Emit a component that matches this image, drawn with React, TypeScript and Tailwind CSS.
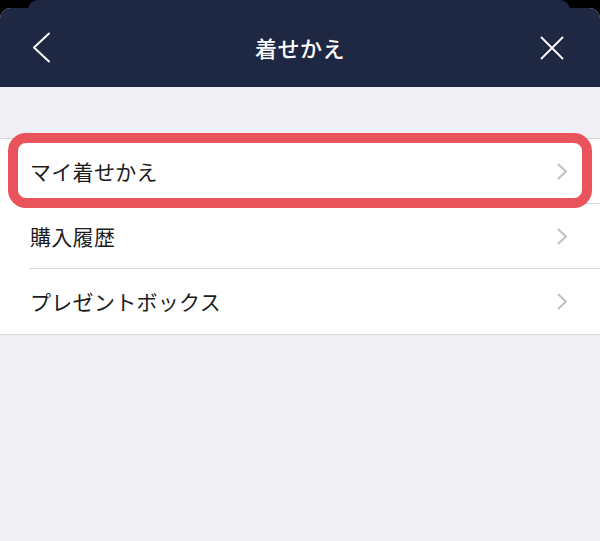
import React from "react";

const font = { fontFamily: '"Noto Sans CJK JP", "Noto Sans", sans-serif' };

function Chevron() {
  return (
    <svg width="11" height="17" viewBox="0 0 11 17" fill="none">
      <path d="M1.5 1.5 L9 8.5 L1.5 15.5" stroke="#bfbfc4" strokeWidth="2" strokeLinecap="round" strokeLinejoin="round" />
    </svg>
  );
}

function Row({ label, highlight, last }: { label: string; highlight?: boolean; last?: boolean }) {
  return (
    <div className="relative h-[65px] bg-white">
      <div className="flex h-full items-center justify-between pl-[30px] pr-[32px]">
        <span className="text-[21px] leading-none tracking-[0.3px] text-[#1c1c1e]">{label}</span>
        <Chevron />
      </div>
      {!last && <div className="absolute bottom-0 left-[29px] right-0 h-px bg-[#d9d9de]" />}
      {highlight && (
        <div className="pointer-events-none absolute left-[8px] right-[8px] top-[-6px] z-10 h-[75px] rounded-[18px] border-[10px] border-[#e9535b]" />
      )}
    </div>
  );
}

export default function App() {
  return (
    <div className="flex h-[541px] w-[600px] flex-col overflow-hidden bg-black" style={font}>
      <div className="flex h-[8px] shrink-0 pl-[28px] pr-[30px]">
        <div className="h-[20px] flex-1 rounded-t-[10px] bg-[#1f2843]" />
      </div>
      <div className="relative z-10 flex flex-1 flex-col overflow-hidden rounded-t-[11px] bg-[#efeff4]">
        <div className="grid h-[79px] shrink-0 grid-cols-[1fr_auto_1fr] items-center bg-[#1e2843] pl-[32px] pr-[36px]">
          <div className="flex">
            <svg width="19" height="31" viewBox="0 0 19 31" fill="none">
              <path d="M17 1.5 L2 15.5 L17 29.5" stroke="#ffffff" strokeWidth="2" strokeLinecap="round" strokeLinejoin="round" />
            </svg>
          </div>
          <span className="pl-[4px] text-[22px] font-medium tracking-[0.5px] text-white">着せかえ</span>
          <div className="flex justify-end">
            <svg width="24" height="24" viewBox="0 0 24 24" fill="none">
              <path d="M1.5 1.5 L22.5 22.5 M22.5 1.5 L1.5 22.5" stroke="#ffffff" strokeWidth="1.8" strokeLinecap="round" />
            </svg>
          </div>
        </div>
        <div className="h-[51px] shrink-0" />
        <div className="border-y border-[#d6d6db] bg-white">
          <Row label="マイ着せかえ" highlight />
          <Row label="購入履歴" />
          <Row label="プレゼントボックス" last />
        </div>
      </div>
    </div>
  );
}
